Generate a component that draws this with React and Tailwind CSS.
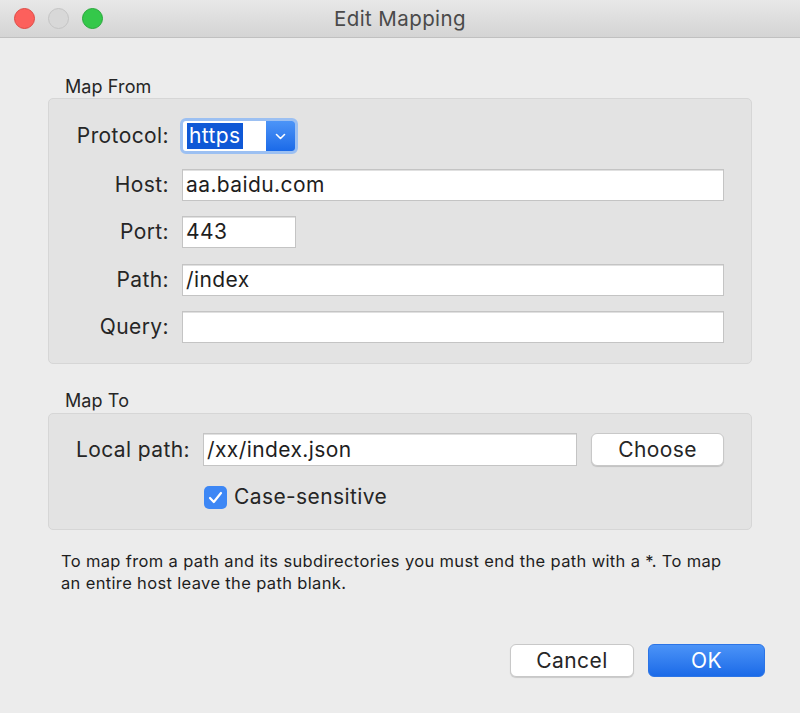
import React from 'react';

const font = { fontFamily: 'Inter, "Liberation Sans", sans-serif' };

const Field = ({ value, className = '' }) => (
  <div
    className={`h-[32px] bg-white border border-[#c4c4c4] shadow-[inset_0_1px_0_#e0e0e0] flex items-center pl-[3px] text-[21px] tracking-[0.4px] text-[#1e1e1e] ${className}`}
  >
    {value}
  </div>
);

const Label = ({ children }) => (
  <div className="text-right text-[21px] tracking-[0.4px] text-[#262626]">{children}</div>
);

const App = () => {
  return (
    <div style={font} className="w-[800px] h-[713px] bg-[#ececec] flex flex-col overflow-hidden">
      {/* title bar */}
      <div className="h-[38px] shrink-0 bg-gradient-to-b from-[#e8e8e8] to-[#d4d4d4] border-b border-[#c0c0c0] flex items-center relative">
        <div className="flex items-center gap-[13px] pl-[14px]">
          <span className="w-[21px] h-[21px] rounded-full bg-[#fc605c] border border-[#de4a44]" />
          <span className="w-[21px] h-[21px] rounded-full bg-[#d8d8d8] border border-[#c4c4c4]" />
          <span className="w-[21px] h-[21px] rounded-full bg-[#34c84a] border border-[#28a83a]" />
        </div>
        <div className="absolute inset-0 pt-[2px] flex items-center justify-center text-[20.5px] tracking-[0.4px] text-[#4a4a4a]">
          Edit Mapping
        </div>
      </div>

      <div className="px-[48px] pt-[38px]">
        {/* Map From */}
        <div className="pl-[17px] text-[18px] tracking-[0.1px] text-[#262626] leading-[22px]">Map From</div>
        <div className="w-[704px] bg-[#e3e3e3] border border-[#d6d6d6] rounded-[5px] pt-[19px] pb-[20px] pr-[27px]">
          <div className="grid grid-cols-[120px_1fr] gap-x-[13px] items-center">
            <Label>Protocol:</Label>
            <div className="flex">
              <div className="h-[36px] w-[118px] -ml-[2px] rounded-[6px] border-[3px] border-[#9cc0f2] flex overflow-hidden bg-white">
                <div className="flex-1 flex items-center pl-[4px]">
                  <span className="bg-[#0f58d6] text-white text-[21px] tracking-[0.4px] leading-[26px] px-[2px]">https</span>
                </div>
                <div className="w-[29px] bg-gradient-to-b from-[#4c94f7] to-[#1a6ae8] flex items-center justify-center">
                  <svg width="11" height="7" viewBox="0 0 11 7" fill="none">
                    <path d="M1.5 1.5 L5.5 5.5 L9.5 1.5" stroke="white" strokeWidth="1.6" strokeLinecap="round" strokeLinejoin="round" />
                  </svg>
                </div>
              </div>
            </div>

            <div className="col-span-2 h-[15px]" />
            <Label>Host:</Label>
            <Field value="aa.baidu.com" />

            <div className="col-span-2 h-[15px]" />
            <Label>Port:</Label>
            <Field value="443" className="w-[114px]" />

            <div className="col-span-2 h-[16px]" />
            <Label>Path:</Label>
            <Field value="/index" />

            <div className="col-span-2 h-[15px]" />
            <Label>Query:</Label>
            <Field value="" />
          </div>
        </div>

        {/* Map To */}
        <div className="pl-[17px] mt-[26px] text-[18px] tracking-[0.1px] text-[#262626] leading-[22px] mb-[1px]">Map To</div>
        <div className="w-[704px] bg-[#e3e3e3] border border-[#d6d6d6] rounded-[5px] pt-[19px] pb-[19px] pr-[27px]">
          <div className="flex items-center">
            <div className="w-[141px] text-right text-[21px] tracking-[0.4px] text-[#262626]">Local path:</div>
            <Field value="/xx/index.json" className="ml-[13px] w-[374px] h-[33px]" />
            <button className="ml-[14px] flex-1 h-[33px] bg-white rounded-[6px] border border-[#c8c8c8] shadow-[0_1px_1px_rgba(0,0,0,0.15)] text-[21px] tracking-[0.4px] text-[#262626]">
              Choose
            </button>
          </div>
          <div className="flex items-center mt-[18px] pl-[155px]">
            <span className="w-[23px] h-[23px] rounded-[5px] bg-[#3d87f5] flex items-center justify-center">
              <svg width="15" height="13" viewBox="0 0 15 13" fill="none">
                <path d="M2 7 L5.8 11 L13 2" stroke="white" strokeWidth="2.2" strokeLinecap="round" strokeLinejoin="round" />
              </svg>
            </span>
            <span className="ml-[7px] text-[21px] tracking-[0.4px] text-[#262626] leading-[26px]">Case-sensitive</span>
          </div>
        </div>

        <p className="mt-[20px] pl-[13px] text-[16.5px] tracking-[0.35px] leading-[22px] text-[#1e1e1e] w-[680px]">
          To map from a path and its subdirectories you must end the path with a *. To map an entire host leave the path blank.
        </p>
      </div>

      <div className="flex justify-end gap-[14px] pr-[35px] mt-auto mb-[36px]">
        <button className="w-[124px] h-[33px] bg-white rounded-[6px] border border-[#c8c8c8] shadow-[0_1px_1px_rgba(0,0,0,0.15)] text-[21px] tracking-[0.4px] text-[#262626]">
          Cancel
        </button>
        <button className="w-[117px] h-[33px] rounded-[6px] bg-gradient-to-b from-[#4b93f7] to-[#1a6ae8] border border-[#2b74e6] text-[21px] tracking-[0.4px] text-white">
          OK
        </button>
      </div>
    </div>
  );
};

export default App;
